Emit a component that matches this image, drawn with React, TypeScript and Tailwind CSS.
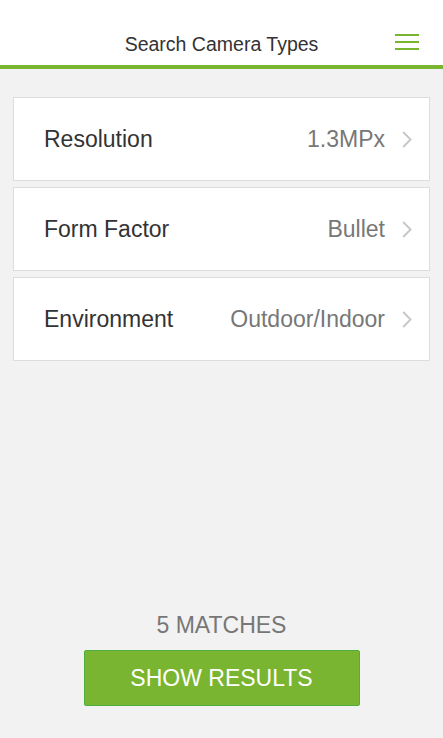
interface FilterRowProps {
  label: string;
  value: string;
}

const FilterRow = ({ label, value }: FilterRowProps) => (
  <button className="flex items-center justify-between h-[84px] w-full bg-white border border-[#dddddd] pl-[30px] pr-[17px] text-left">
    <span className="text-[23px] text-[#333333]">{label}</span>
    <span className="flex items-center">
      <span className="text-[23px] text-[#777777]">{value}</span>
      <svg className="ml-[17px] w-[10px] h-[17px]" viewBox="0 0 10 17" fill="none">
        <polyline points="1.2,1 8.6,8.5 1.2,16" stroke="#c6c6c6" strokeWidth="1.8" />
      </svg>
    </span>
  </button>
);

export default function App() {
  const filters = [
    { label: "Resolution", value: "1.3MPx" },
    { label: "Form Factor", value: "Bullet" },
    { label: "Environment", value: "Outdoor/Indoor" },
  ];

  return (
    <div
      className="flex flex-col h-[738px] w-full bg-[#f2f2f2]"
      style={{ fontFamily: '"Liberation Sans", Arial, sans-serif' }}
    >
      {/* header */}
      <header className="bg-white h-[69px] pt-[32px] border-b-4 border-[#79b530]">
        <div className="relative flex items-center justify-center h-[26px]">
          <h1 className="text-[19.5px] text-[#333333]">Search Camera Types</h1>
          <button className="absolute right-[24px] top-[2px] flex flex-col gap-[5px] w-[24px]" aria-label="Menu">
            <span className="block h-[2px] w-full bg-[#79b530]" />
            <span className="block h-[2px] w-full bg-[#79b530]" />
            <span className="block h-[2px] w-full bg-[#79b530]" />
          </button>
        </div>
      </header>

      {/* filters */}
      <div className="flex flex-col gap-[6px] px-[13px] pt-[28px]">
        {filters.map((f) => (
          <FilterRow key={f.label} label={f.label} value={f.value} />
        ))}
      </div>

      <div className="flex-1" />

      {/* footer */}
      <div className="flex flex-col items-center pb-[32px]">
        <p className="text-[23px] text-[#777777] uppercase">5 Matches</p>
        <button className="mt-[8px] w-[276px] h-[56px] bg-[#79b530] border border-[#4caf3f] rounded-[2px] text-white text-[23px]">
          SHOW RESULTS
        </button>
      </div>
    </div>
  );
}
